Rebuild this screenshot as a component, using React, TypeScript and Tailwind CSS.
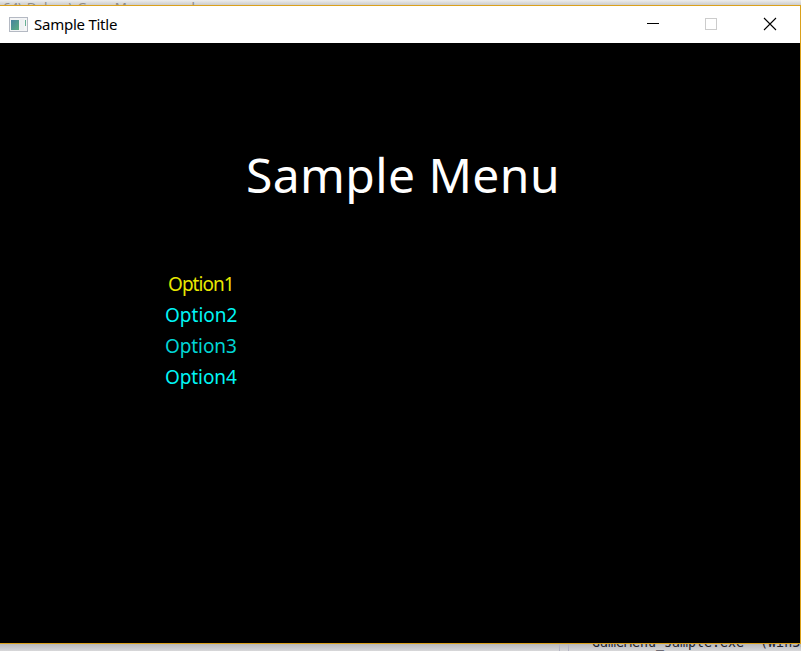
const options = [
  { label: 'Option1', style: 'text-[#e8e800] ml-[3px] tracking-[-0.95px]' },
  { label: 'Option2', style: 'text-[#00f5f5]' },
  { label: 'Option3', style: 'text-[#00d5d5] tracking-[-0.1px]' },
  { label: 'Option4', style: 'text-[#00f5f5] tracking-[-0.1px]' },
];

function AppIcon() {
  return (
    <svg width="19" height="16" viewBox="0 0 19 16" shapeRendering="crispEdges">
      <defs>
        <linearGradient id="screen" x1="0" y1="0" x2="1" y2="1">
          <stop offset="0" stopColor="#4682a0" />
          <stop offset="1" stopColor="#5aae80" />
        </linearGradient>
      </defs>
      <rect x="0.5" y="0.5" width="18" height="14" fill="#f4f5f6" stroke="#b4b9c3" />
      <rect x="2" y="3" width="8" height="10" fill="url(#screen)" />
      <rect x="11" y="2" width="4" height="11" fill="#eef1f3" />
      <rect x="16" y="3" width="1" height="6" fill="#67b195" />
    </svg>
  );
}

function TitleBar() {
  return (
    <header className="flex h-[37px] shrink-0 items-center bg-white pl-[9px] text-black">
      <AppIcon />
      <span className="mb-[2px] ml-[6px] h-[22px] whitespace-nowrap text-[15px] leading-[22px] tracking-[-0.25px]">Sample Title</span>
      <div className="ml-auto flex h-full items-center">
        <svg width="176" height="37" viewBox="624 6 176 37" fill="none" shapeRendering="crispEdges">
          <path d="M647 23.5h12" stroke="#000" />
          <rect x="705.5" y="18.5" width="11" height="11" stroke="#ccc" />
          <path d="M764 18l12 12M776 18l-12 12" stroke="#000" strokeWidth="1.1" shapeRendering="auto" />
        </svg>
      </div>
    </header>
  );
}

export default function App() {
  return (
    <div className="flex h-[651px] w-[801px] flex-col overflow-hidden bg-[#d5d5d7] font-['Noto_Sans','Open_Sans',sans-serif]">
      <div className="h-[5px] shrink-0 overflow-hidden bg-linear-to-b from-[#eeeeee] to-[#cccccc] pl-[3px]">
        <div className="whitespace-pre text-[13.4px] leading-[14px] text-[#8c8c8c]">64\ Debug\ GameMenu_sample</div>
      </div>
      <main className="flex h-[639px] shrink-0 flex-col border-y border-r border-[#dba11c] bg-black">
        <TitleBar />
        <section className="flex h-[600px] flex-col">
          <h1 className="mt-[99px] ml-[246px] h-[66px] shrink-0 whitespace-nowrap text-[48px] leading-[66px] tracking-[0.4px] text-white">Sample Menu</h1>
          <ul className="mt-[61px] ml-[165px] flex flex-col">
            {options.map((o) => (
              <li key={o.label} className={`h-[31px] whitespace-nowrap text-[19px] leading-[31px] ${o.style}`}>
                {o.label}
              </li>
            ))}
          </ul>
        </section>
      </main>
      <footer className="flex h-[7px] shrink-0 overflow-hidden bg-linear-to-b from-[#b8b8ba] to-[#d8d8da]">
        <div className="ml-[559px] w-[10px] shrink-0 border-x border-[#b5b5c5]" />
        <div className="ml-[23px] h-[16px] shrink-0 -translate-y-[9px] whitespace-pre font-['DejaVu_Sans_Mono',monospace] text-[13.3px] leading-[16px] text-[#1e2430]">GameMenu_sample.exe' (Win32)</div>
      </footer>
    </div>
  );
}
